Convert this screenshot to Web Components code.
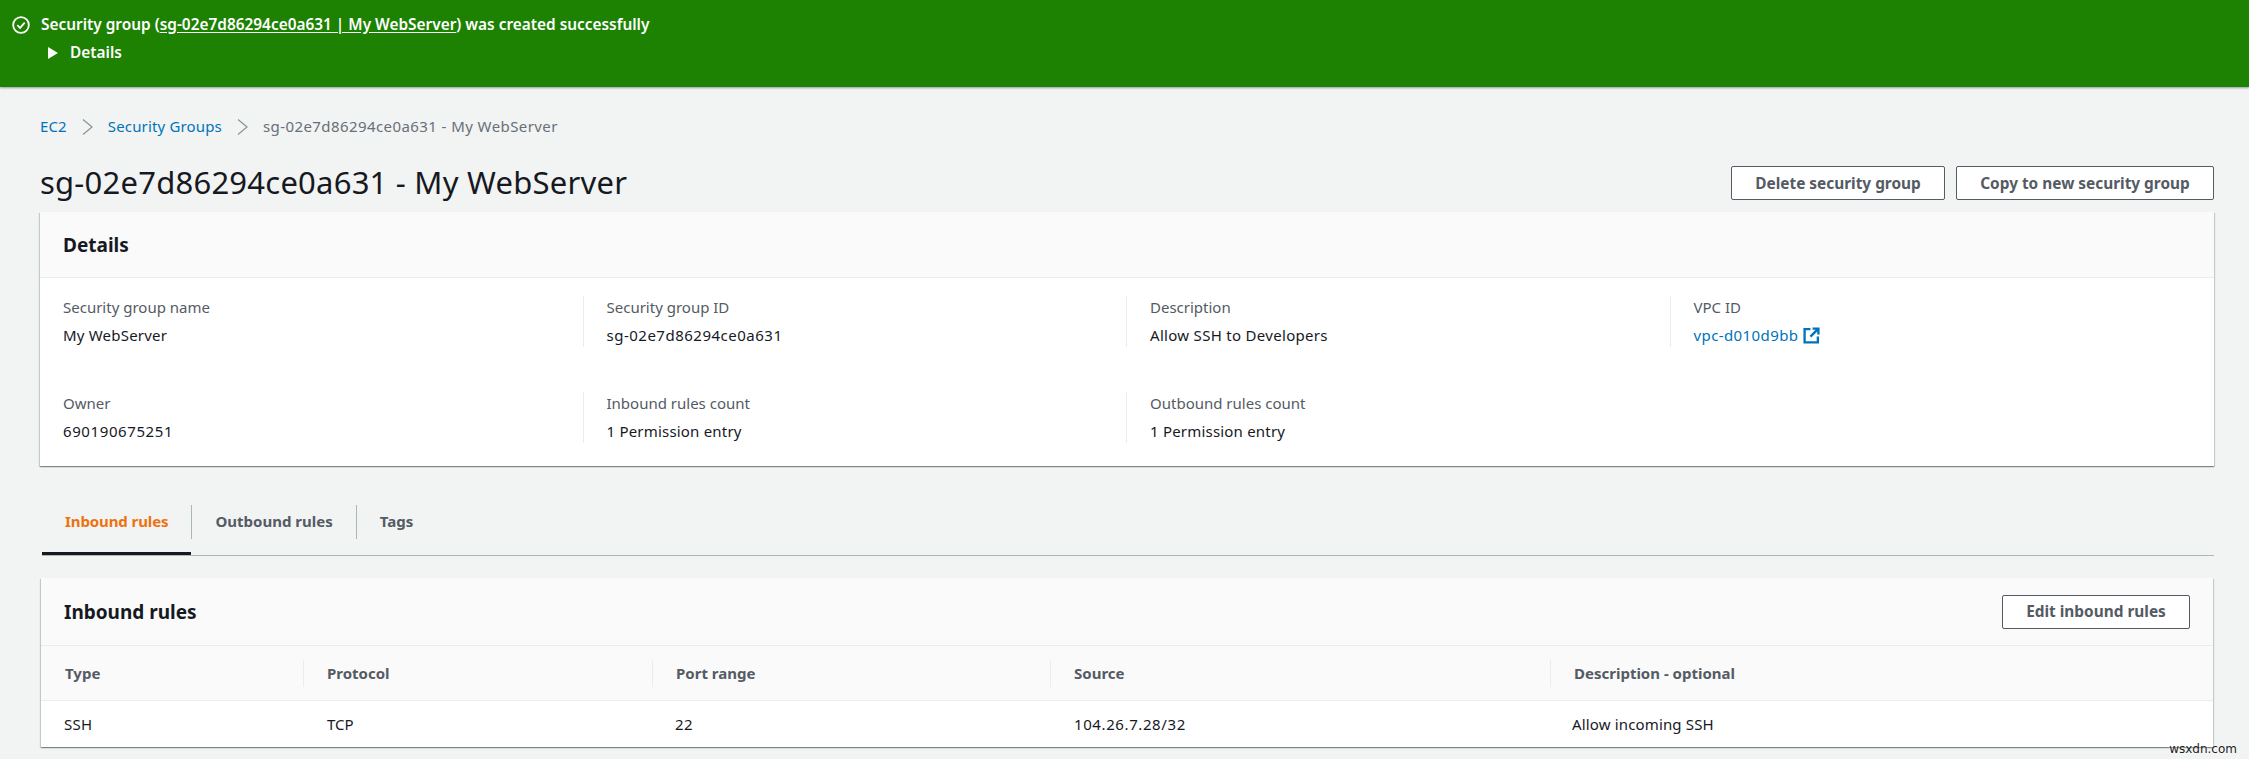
<!DOCTYPE html>
<html>
<head>
<meta charset="utf-8">
<style>
  html, body { margin: 0; padding: 0; }
  body {
    width: 2249px;
    height: 759px;
    overflow: hidden;
    background: #f2f3f3;
    color: #16191f;
    font-family: "Noto Sans", "Liberation Sans", sans-serif;
    font-size: 15px;
    position: relative;
  }
</style>
</head>
<body>
<flash-bar></flash-bar>
<page-head></page-head>
<details-card></details-card>
<rule-tabs></rule-tabs>
<rules-card></rules-card>
<water-mark>wsxdn.com</water-mark>

<script>
class FlashBar extends HTMLElement {
  constructor() {
    super();
    this.attachShadow({mode: 'open'}).innerHTML = `
      <style>
        :host { display: block; height: 87px; box-sizing: border-box; background: #1d8102; color: #fff;
                box-shadow: 0 1px 2px rgba(0,28,36,.4); font-weight: 600; font-size: 15.4px; padding-top: 15px; }
        .row { display: flex; align-items: center; height: 20px; padding-left: 12px; gap: 11px; white-space: nowrap; }
        .row.sub { margin-top: 8px; padding-left: 48px; gap: 12px; }
        .row span { margin-top: -2px; }
        u { text-underline-offset: 2px; }
        svg { display: block; flex: none; }
      </style>
      <div class="row">
        <svg width="18" height="18" viewBox="0 0 17 17" fill="none" stroke="#fff" stroke-width="1.7">
          <circle cx="8.5" cy="8.5" r="7.4"/><path d="M5 8.6l2.6 2.6 4.4-5"/>
        </svg>
        <span>Security group (<u>sg-02e7d86294ce0a631 | My WebServer</u>) was created successfully</span>
      </div>
      <div class="row sub">
        <svg width="10" height="12" viewBox="0 0 9 11"><path d="M0 0l9 5.5L0 11z" fill="#fff"/></svg>
        <span>Details</span>
      </div>`;
  }
}

class AwsButton extends HTMLElement {
  constructor() {
    super();
    this.attachShadow({mode: 'open'}).innerHTML = `
      <style>
        :host { display: inline-flex; align-items: center; justify-content: center; box-sizing: border-box;
                height: 34px; border: 1px solid #545b64; border-radius: 2px; background: #fff;
                color: #545b64; font-weight: 700; font-size: 15.4px; white-space: nowrap; }
      </style>
      <slot></slot>`;
  }
}

class PageHead extends HTMLElement {
  constructor() {
    super();
    const chevron = '<svg width="11" height="16" viewBox="0 0 11 16" fill="none" stroke="#879596" stroke-width="1.2"><path d="M1 .5L10 8l-9 7.5"/></svg>';
    this.attachShadow({mode: 'open'}).innerHTML = `
      <style>
        :host { display: block; padding: 0 35px 0 40px; }
        nav { display: flex; align-items: center; height: 20px; margin-top: 30px; gap: 15px; color: #687078; white-space: nowrap; }
        nav a { color: #0073bb; margin-top: -2px; letter-spacing: .15px; }
        nav span { letter-spacing: .42px; margin-top: -2px; }
        .title { display: flex; justify-content: space-between; align-items: flex-start; margin-top: 28px; height: 47px; }
        h1 { margin: -3px 0 0; font-size: 31px; letter-spacing: .23px; font-weight: 400; line-height: 40px; color: #16191f; white-space: nowrap; }
        .acts { display: flex; gap: 11px; margin-top: 1px; }
        aws-button.del { width: 214px; }
        aws-button.copy { width: 258px; }
      </style>
      <nav><a>EC2</a>${chevron}<a>Security Groups</a>${chevron}<span>sg-02e7d86294ce0a631 - My WebServer</span></nav>
      <div class="title">
        <h1>sg-02e7d86294ce0a631 - My WebServer</h1>
        <div class="acts">
          <aws-button class="del">Delete security group</aws-button>
          <aws-button class="copy">Copy to new security group</aws-button>
        </div>
      </div>`;
  }
}

class KvItem extends HTMLElement {
  constructor() {
    super();
    this.attachShadow({mode: 'open'}).innerHTML = `
      <style>
        :host { display: block; box-sizing: border-box; padding-left: 23px; height: 51px; border-right: 1px solid #eaeded; }
        :host([last]) { border-right: 0; }
        .k { color: #545b64; line-height: 24px; margin-top: -1px; }
        .v { color: #16191f; line-height: 24px; margin-top: 4px; display: flex; align-items: center; gap: 5px; letter-spacing: .2px; }
      </style>
      <div class="k"><slot name="k"></slot></div>
      <div class="v"><slot></slot></div>`;
  }
}

class DetailsCard extends HTMLElement {
  constructor() {
    super();
    const ext = '<svg width="17" height="17" viewBox="0 0 16 16" fill="none" stroke="#0073bb" stroke-width="2.2"><path d="M7 2H1.5v12.5H14V9"/><path d="M9 1.5h5.5V7M14 2L7 9"/></svg>';
    this.attachShadow({mode: 'open'}).innerHTML = `
      <style>
        :host { display: block; margin: 0 35px 0 40px; background: #fff;
                box-shadow: 0 1px 1px 0 rgba(0,28,36,.3), 1px 1px 1px 0 rgba(0,28,36,.15), -1px 1px 1px 0 rgba(0,28,36,.15); height: 254px; }
        header { box-sizing: border-box; height: 66px; padding-left: 23px; background: #fafafa; border-bottom: 1px solid #eaeded;
                 display: flex; align-items: center; font-size: 19px; font-weight: 700; }
        .grid { display: grid; grid-template-columns: repeat(4, 1fr); row-gap: 45px; padding-top: 18px; }
        a { color: #0073bb; letter-spacing: .4px; }
        .id { letter-spacing: .5px; }
        .num { letter-spacing: .6px; }
      </style>
      <header>Details</header>
      <div class="grid">
        <kv-item><span slot="k">Security group name</span>My WebServer</kv-item>
        <kv-item><span slot="k">Security group ID</span><span class="id">sg-02e7d86294ce0a631</span></kv-item>
        <kv-item><span slot="k">Description</span><span style="letter-spacing:.3px">Allow SSH to Developers</span></kv-item>
        <kv-item last><span slot="k">VPC ID</span><a>vpc-d010d9bb</a>${ext}</kv-item>
        <kv-item><span slot="k">Owner</span><span class="num">690190675251</span></kv-item>
        <kv-item><span slot="k">Inbound rules count</span>1 Permission entry</kv-item>
        <kv-item last><span slot="k">Outbound rules count</span>1 Permission entry</kv-item>
      </div>`;
  }
}

class RuleTabs extends HTMLElement {
  constructor() {
    super();
    this.attachShadow({mode: 'open'}).innerHTML = `
      <style>
        :host { display: flex; margin: 39px 35px 0 42px; height: 50px; box-sizing: content-box;
                border-bottom: 1px solid #aab7b8; color: #545b64; font-weight: 700; }
        .tab { display: flex; align-items: flex-start; box-sizing: border-box; padding: 0 23px; height: 50px; position: relative; line-height: 32px; }
        .tab + .tab::before { content: ""; position: absolute; left: 0; top: 0; height: 34px; width: 1px; background: #aab7b8; }
        .tab + .tab { padding-left: 24px; }
        .on { color: #ec7211; box-shadow: inset 0 -3px 0 #16191f; letter-spacing: -.1px; }
      </style>
      <div class="tab on">Inbound rules</div>
      <div class="tab">Outbound rules</div>
      <div class="tab">Tags</div>`;
  }
}

class RulesCard extends HTMLElement {
  constructor() {
    super();
    this.attachShadow({mode: 'open'}).innerHTML = `
      <style>
        :host { display: block; margin: 22px 36px 0 41px; height: 169px; background: #fff;
                box-shadow: 0 1px 1px 0 rgba(0,28,36,.3), 1px 1px 1px 0 rgba(0,28,36,.15), -1px 1px 1px 0 rgba(0,28,36,.15); }
        header { box-sizing: border-box; height: 68px; padding: 0 23px; background: #fafafa; border-bottom: 1px solid #eaeded;
                 display: flex; align-items: center; justify-content: space-between; font-size: 19px; font-weight: 700; }
        aws-button { width: 188px; }
        .row { display: grid; grid-template-columns: 262px 349px 398px 500px 1fr; }
        .head { height: 55px; background: #fafafa; border-bottom: 1px solid #eaeded; box-sizing: border-box; align-items: center;
                color: #545b64; font-weight: 700; }
        .head div { padding-left: 23px; height: 27px; line-height: 27px; border-left: 1px solid #eaeded; }
        .head div:first-child { border-left: 0; padding-left: 24px; }
        .body { height: 46px; align-items: center; }
        .body div { padding-left: 24px; }
        .body div:first-child { padding-left: 23px; letter-spacing: .3px; }
        .body .ip { letter-spacing: .6px; }
        .body .note { letter-spacing: .15px; padding-left: 22px; }
        .body .port { padding-left: 23px; letter-spacing: .3px; }
      </style>
      <header>Inbound rules<aws-button>Edit inbound rules</aws-button></header>
      <div class="row head"><div>Type</div><div>Protocol</div><div>Port range</div><div>Source</div><div>Description - optional</div></div>
      <div class="row body"><div>SSH</div><div>TCP</div><div class="port">22</div><div class="ip">104.26.7.28/32</div><div class="note">Allow incoming SSH</div></div>`;
  }
}

class WaterMark extends HTMLElement {
  constructor() {
    super();
    this.attachShadow({mode: 'open'}).innerHTML = `
      <style>
        :host { position: absolute; right: 12px; bottom: 2px; color: #1a1a1a; font-family: "DejaVu Sans", sans-serif; font-size: 12px; line-height: 16px; text-shadow: 0 0 2px #fff; }
      </style>
      <slot></slot>`;
  }
}

customElements.define('flash-bar', FlashBar);
customElements.define('aws-button', AwsButton);
customElements.define('page-head', PageHead);
customElements.define('kv-item', KvItem);
customElements.define('details-card', DetailsCard);
customElements.define('rule-tabs', RuleTabs);
customElements.define('rules-card', RulesCard);
customElements.define('water-mark', WaterMark);
</script>
</body>
</html>
